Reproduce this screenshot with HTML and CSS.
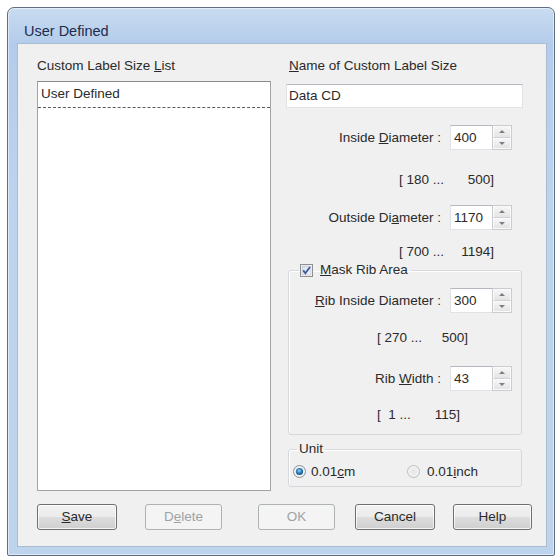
FILE: index.html
```html
<!DOCTYPE html>
<html>
<head>
<meta charset="utf-8">
<link rel="stylesheet" href="styles.css">
</head>
<body>
<div class="window">
  <div class="titlebar">User Defined</div>
  <div class="client">
    <div class="main">
      <div class="col-left">
        <div class="lbl">Custom Label Size <u>L</u>ist</div>
        <div class="listbox">
          <div class="list-item">User Defined</div>
        </div>
      </div>
      <div class="col-right">
        <div class="lbl lbl-name"><u>N</u>ame of Custom Label Size</div>
        <div class="textbox">Data CD</div>

        <div class="field-row row-inside">
          <span class="flabel">Inside <u>D</u>iameter :</span>
          <div class="num">400</div>
          <div class="spin"><div class="spin-up"><i class="tri-up"></i></div><div class="spin-dn"><i class="tri-dn"></i></div></div>
        </div>
        <div class="range range-a r-top"><span class="ra">[ 180 ...</span><span class="rb">500]</span></div>

        <div class="field-row row-outside">
          <span class="flabel">Outside Di<u>a</u>meter :</span>
          <div class="num">1170</div>
          <div class="spin"><div class="spin-up"><i class="tri-up"></i></div><div class="spin-dn"><i class="tri-dn"></i></div></div>
        </div>
        <div class="range range-a r-mid"><span class="ra">[ 700 ...</span><span class="rb">1194]</span></div>

        <fieldset class="group group-mask">
          <legend class="legend-mask">
            <svg class="chk" width="13" height="13" viewBox="0 0 13 13">
              <defs>
                <linearGradient id="cg" x1="0" y1="0" x2="1" y2="1">
                  <stop offset="0" stop-color="#d6deea"/>
                  <stop offset="1" stop-color="#f4f6fa"/>
                </linearGradient>
              </defs>
              <rect x="0.5" y="0.5" width="12" height="12" fill="#fff" stroke="#8e8f8f"/>
              <rect x="2" y="2" width="9" height="9" fill="url(#cg)" stroke="#aeb6c4" stroke-width="0.6"/>
              <path d="M3.2 6.4 L5.4 9.2 L10 3" fill="none" stroke="#3d5a9a" stroke-width="1.8"/>
            </svg>
            <span><u>M</u>ask Rib Area</span>
          </legend>
          <div class="field-row row-rib">
            <span class="flabel"><u>R</u>ib Inside Diameter :</span>
            <div class="num">300</div>
            <div class="spin"><div class="spin-up"><i class="tri-up"></i></div><div class="spin-dn"><i class="tri-dn"></i></div></div>
          </div>
          <div class="range range-b r-rib1"><span class="ra">[ 270 ...</span><span class="rb">500]</span></div>
          <div class="field-row row-width">
            <span class="flabel">Rib <u>W</u>idth :</span>
            <div class="num">43</div>
            <div class="spin"><div class="spin-up"><i class="tri-up"></i></div><div class="spin-dn"><i class="tri-dn"></i></div></div>
          </div>
          <div class="range range-b range-c r-rib2"><span class="ra">[ &nbsp;1 ...</span><span class="rb">115]</span></div>
        </fieldset>

        <fieldset class="group group-unit">
          <legend class="legend-unit">Unit</legend>
          <div class="radios">
            <div class="radio-item first">
              <svg class="radio" width="13" height="13" viewBox="0 0 13 13">
                <defs>
                  <radialGradient id="rg" cx="0.45" cy="0.4" r="0.6">
                    <stop offset="0" stop-color="#9fd4f4"/>
                    <stop offset="0.5" stop-color="#2f86c2"/>
                    <stop offset="1" stop-color="#1d4f7c"/>
                  </radialGradient>
                </defs>
                <circle cx="6.5" cy="6.5" r="6" fill="#eef1f4" stroke="#8b9097"/>
                <circle cx="6.5" cy="6.5" r="3.6" fill="url(#rg)"/>
              </svg>
              <span>0.01<u>c</u>m</span>
            </div>
            <div class="radio-item">
              <svg class="radio" width="13" height="13" viewBox="0 0 13 13">
                <defs>
                  <radialGradient id="rg2" cx="0.5" cy="0.5" r="0.55">
                    <stop offset="0" stop-color="#e2e4e6"/>
                    <stop offset="1" stop-color="#f7f7f7"/>
                  </radialGradient>
                </defs>
                <circle cx="6.5" cy="6.5" r="6" fill="url(#rg2)" stroke="#b9bcc0"/>
              </svg>
              <span>0.01<u>i</u>nch</span>
            </div>
          </div>
        </fieldset>
      </div>
    </div>
    <div class="buttons">
      <div class="btn btn-save"><span><u>S</u>ave</span></div>
      <div class="btn btn-delete disabled"><span>D<u>e</u>lete</span></div>
      <div class="btn btn-ok disabled"><span>OK</span></div>
      <div class="btn btn-cancel"><span>Cancel</span></div>
      <div class="btn btn-help"><span>Help</span></div>
    </div>
  </div>
</div>
</body>
</html>
```
FILE: styles.css
```css
* { box-sizing: border-box; }
html, body { margin: 0; padding: 0; background: #ffffff; }
body {
  font-family: "Liberation Sans", Arial, sans-serif;
  font-size: 13.5px;
  color: #2a2a2a;
}
u { text-decoration: underline; text-underline-offset: 1px; }

.window {
  margin: 7px 0 0 7px;
  width: 548px;
  height: 549px;
  border: 1px solid #5f6e80;
  border-radius: 7px 7px 2px 2px;
  background: linear-gradient(180deg, #c8dbf0 0px, #b4cceb 36px, #bdd4ee 200px, #bed4ed 100%);
  padding: 0 7px 8px 9px;
  display: flex;
  flex-direction: column;
  box-shadow: inset 0 0 0 1px rgba(255,255,255,0.5);
}
.titlebar {
  height: 35px;
  padding: 15px 0 0 7px;
  line-height: 16px;
  font-size: 14.5px;
  color: #1e2c4c;
}
.client {
  flex: 1;
  background: #f0f0f0;
  border: 1px solid #a9bbd0;
  padding: 14px 0 0 19px;
  display: flex;
  flex-direction: column;
}
.main {
  display: grid;
  grid-template-columns: 234px 238px;
  column-gap: 15px;
  align-items: start;
}
.lbl { height: 16px; line-height: 16px; white-space: nowrap; }
.lbl-name { padding-left: 3px; }

.listbox {
  margin-top: 7px;
  height: 410px;
  background: #ffffff;
  border: 1px solid #a3a3a3;
  border-top-color: #8a8a8a;
}
.list-item {
  height: 26px;
  line-height: 24px;
  padding-left: 3px;
  border-bottom: 1px dashed #5a5a5a;
}

.textbox {
  margin-top: 10px;
  width: 237px;
  height: 24px;
  line-height: 22px;
  padding-left: 2px;
  background: #ffffff;
  border: 1px solid #dfe3e8;
  border-top-color: #b4b8be;
}

.field-row {
  display: flex;
  justify-content: flex-end;
  align-items: center;
  height: 25px;
  padding-right: 12px;
}
.flabel { margin-right: 9px; white-space: nowrap; }
.num {
  width: 42px;
  height: 25px;
  line-height: 23px;
  padding-left: 3px;
  background: #ffffff;
  border: 1px solid #dfe3e8;
  border-top-color: #b4b8be;
  border-right: none;
}
.spin {
  width: 20px;
  height: 25px;
  border: 1px solid #c9cdd2;
  display: flex;
  flex-direction: column;
  background: #ffffff;
}
.spin-up, .spin-dn {
  flex: 1;
  display: flex;
  align-items: center;
  justify-content: center;
  background: linear-gradient(180deg, #f6f6f6, #e4e4e4);
  border: 1px solid #fafafa;
}
.spin-up { border-bottom: 1px solid #cfd2d6; }
.tri-up, .tri-dn {
  display: block;
  width: 0; height: 0;
  border-left: 3px solid transparent;
  border-right: 3px solid transparent;
}
.tri-up { border-bottom: 3px solid #7b7f85; }
.tri-dn { border-top: 3px solid #7b7f85; }

.row-inside { margin-top: 17px; }
.row-outside { margin-top: 17px; }

.range {
  display: flex;
  justify-content: space-between;
  height: 16px;
  line-height: 16px;
  white-space: pre;
}
.range-a { margin-left: 113px; width: 95px; }
.range-b { margin-left: 78px; width: 91px; }
.range-c { width: 83px; }
.r-top { margin-top: 22px; }
.r-mid { margin-top: 14px; }
.r-rib1 { margin-top: 17px; }
.r-rib2 { margin-top: 16px; }

.group {
  margin: 0 2px;
  min-width: 0;
  border: 1px solid #d5d9de;
  border-radius: 3px;
  box-shadow: inset 1px 1px 0 #ffffff;
}
.group-mask {
  margin-top: 2px;
  padding: 10px 9px 11px 10px;
}
.legend-mask {
  display: flex;
  align-items: center;
  height: 16px;
  line-height: 16px;
  padding: 0 3px 0 1px;
}
.chk { display: block; margin-right: 7px; }
.group-mask .field-row { padding-right: 0; }
.row-width { margin-top: 20px; }

.group-unit {
  margin-top: 6px;
  padding: 6px 4px 7px 4px;
}
.legend-unit {
  height: 16px;
  line-height: 16px;
  padding: 0 2px;
  margin-left: 4px;
}
.radios { display: flex; height: 16px; align-items: center; }
.radio-item { display: flex; align-items: center; }
.radio-item.first { width: 114px; }
.radio { display: block; margin-right: 5px; }
.radio-item:not(.first) .radio { margin-right: 7px; }

.buttons {
  display: flex;
  margin-top: 13px;
  height: 26px;
}
.btn {
  height: 26px;
  border: 1px solid #707070;
  border-radius: 3px;
  background: linear-gradient(180deg, #f2f2f2 0%, #ebebeb 50%, #dddddd 51%, #cfcfcf 100%);
  box-shadow: inset 0 0 0 1px rgba(255,255,255,0.75);
  display: flex;
  align-items: center;
  justify-content: center;
  line-height: 16px;
}
.btn.disabled {
  border-color: #adb2b5;
  background: #f4f4f4;
  color: #9fa2a6;
  box-shadow: none;
}
.btn-save { width: 80px; }
.btn-delete { width: 77px; margin-left: 28px; }
.btn-ok { width: 77px; margin-left: 36px; }
.btn-cancel { width: 80px; margin-left: 20px; }
.btn-help { width: 79px; margin-left: 18px; }
```
